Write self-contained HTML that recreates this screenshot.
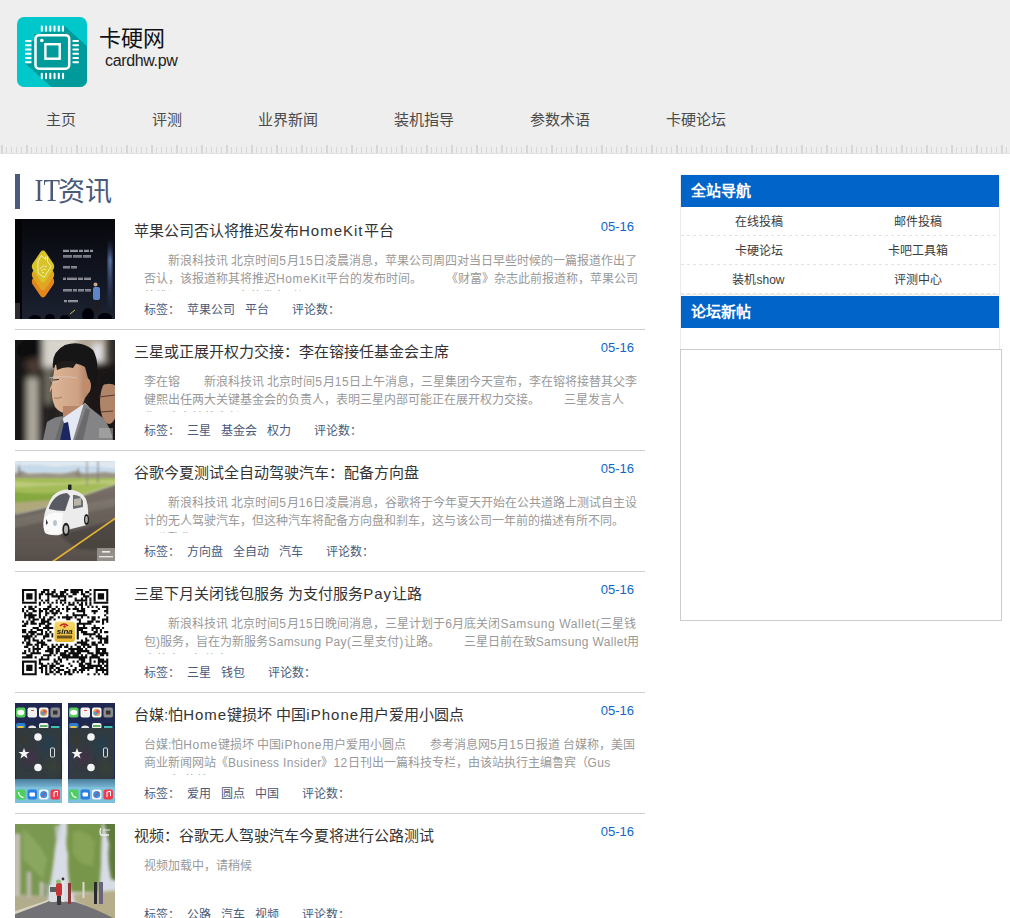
<!DOCTYPE html>
<html lang="zh-CN">
<head>
<meta charset="utf-8">
<title>卡硬网</title>
<style>
*{margin:0;padding:0;box-sizing:border-box}
html,body{width:1010px;height:918px;overflow:hidden;background:#fff}
body{font-family:"Liberation Sans",sans-serif;position:relative;text-spacing-trim:space-all}
.abs{position:absolute}
#hd{position:absolute;left:0;top:0;width:1010px;height:154px;background:#eeeeee}
#ruler1{position:absolute;left:0;top:145px;width:1010px;height:8px;
 background:linear-gradient(90deg,transparent 1px,#d6d6d6 1px,#d6d6d6 3px,transparent 3px) 0 0/25px 8px repeat-x}
#ruler2{position:absolute;left:0;top:147px;width:1010px;height:6px;
 background:linear-gradient(90deg,transparent 1px,#d6d6d6 1px,#d6d6d6 2px,transparent 2px) 0 0/5px 6px repeat-x}
#hdline{position:absolute;left:0;top:153px;width:1010px;height:1px;background:#e2e2e2}
#logo{position:absolute;left:17px;top:17px;width:70px;height:70px}
#sitename{position:absolute;left:99px;top:24px;font-size:22px;line-height:30px;color:#111;white-space:nowrap}
#siteurl{position:absolute;left:105px;top:51px;font-size:16px;letter-spacing:-0.35px;line-height:20px;color:#222;white-space:nowrap}
.nav{position:absolute;top:109px;font-size:15px;line-height:22px;color:#4a4a4a;white-space:nowrap}

#secbar{position:absolute;left:15px;top:174px;width:5px;height:35px;background:#4b5a78}
#sectitle{position:absolute;left:35px;top:172px;font-size:27px;line-height:40px;color:#4b5a78;white-space:nowrap;font-family:"Liberation Serif",serif}
#sectitle span{font-family:"Liberation Sans",sans-serif}
#sectitle em{font-style:normal;display:inline-block;transform:scaleY(1.13);transform-origin:50% 75%;margin-right:-2px;margin-left:-0.5px}
.art{position:absolute;left:0;width:660px;height:121px}
.art .pic{position:absolute;left:15px;top:0;width:100px;height:100px;overflow:hidden}
.art .pic svg{display:block}
.art .tt{position:absolute;left:134px;top:0px;font-size:15px;line-height:24px;color:#333;white-space:nowrap}
.art .dt{position:absolute;left:560px;width:74px;text-align:right;top:0;font-size:13px;line-height:16px;color:#1166c8;white-space:nowrap}
.art .sm{position:absolute;left:144px;top:33px;width:500px;height:39px;overflow:hidden;font-size:12px;line-height:18px;color:#999}
.art .sm div{white-space:nowrap;overflow:hidden}
.art .tg{position:absolute;left:144px;top:81px;font-size:12px;line-height:20px;color:#4b5a78;white-space:nowrap}
.art .tg b{font-weight:normal;margin-left:7px}
.art .tg b+b{margin-left:10px}
.art .tg i{font-style:normal;margin-left:23px}
.art .sm .l{letter-spacing:.6px}
.art .tt .l{letter-spacing:1px}
.art .ln{position:absolute;left:15px;top:110px;width:630px;height:1px;background:#cfcfcf}

#sb1{position:absolute;left:680px;top:174px;width:320px;height:121px;border:1px solid #ebebeb;border-top-color:#faf6f0}
#sb2{position:absolute;left:680px;top:295px;width:320px;height:54px;border:1px solid #ebebeb;border-top-color:#faf6f0;border-bottom:0}
.sbh{position:absolute;left:0;top:0;width:318px;height:32px;background:#0064c9;color:#fff;font-weight:bold;font-size:15px;line-height:32px;padding-left:10px;white-space:nowrap}
.row{position:absolute;left:0;width:318px;height:29px}
.row::after{content:"";position:absolute;left:0;top:28px;width:318px;height:1px;background:repeating-linear-gradient(90deg,#e3e3e3 0 3px,transparent 3px 6px)}
.row div{position:absolute;top:1px;width:159px;text-align:center;font-size:12px;line-height:28px;color:#3c3c3c;white-space:nowrap}
#ifr{position:absolute;left:680px;top:349px;width:322px;height:272px;border:1px solid #cccccc;background:#fff}
</style>
</head>
<body>
<div id="hd">
  <svg id="logo" viewBox="0 0 70 70" width="70" height="70">
    <defs><clipPath id="lc"><rect x="0" y="0" width="70" height="70" rx="7"/></clipPath></defs>
    <rect x="0" y="0" width="70" height="70" rx="7" fill="#00c8ca"/>
    <polygon clip-path="url(#lc)" fill="#009a9b" points="23.8,14.8 47,14.8 47,8.5 100,56.2 100,100 67.8,100 8,46.2 14.6,46.2 14.6,24 17.3,24 17.3,17 23.8,17"/>
    <rect x="18.5" y="18.2" width="33.7" height="33.5" rx="3.5" fill="none" stroke="#fff" stroke-width="2.5"/>
    <rect x="28.4" y="27.2" width="14.3" height="14.5" fill="none" stroke="#fff" stroke-width="2.4"/>
    <circle cx="24.8" cy="23.5" r="1.8" fill="#fff"/>
    <g fill="#fff">
      <rect x="23.8" y="8.5" width="2" height="6.3" rx="1"/><rect x="28.05" y="8.5" width="2" height="6.3" rx="1"/><rect x="32.3" y="8.5" width="2" height="6.3" rx="1"/><rect x="36.55" y="8.5" width="2" height="6.3" rx="1"/><rect x="40.8" y="8.5" width="2" height="6.3" rx="1"/><rect x="45.05" y="8.5" width="2" height="6.3" rx="1"/>
      <rect x="23.8" y="55.7" width="2" height="6.5" rx="1"/><rect x="28.05" y="55.7" width="2" height="6.5" rx="1"/><rect x="32.3" y="55.7" width="2" height="6.5" rx="1"/><rect x="36.55" y="55.7" width="2" height="6.5" rx="1"/><rect x="40.8" y="55.7" width="2" height="6.5" rx="1"/><rect x="45.05" y="55.7" width="2" height="6.5" rx="1"/>
      <rect x="8" y="23" width="6.6" height="2" rx="1"/><rect x="8" y="27.25" width="6.6" height="2" rx="1"/><rect x="8" y="31.5" width="6.6" height="2" rx="1"/><rect x="8" y="35.75" width="6.6" height="2" rx="1"/><rect x="8" y="40" width="6.6" height="2" rx="1"/><rect x="8" y="44.25" width="6.6" height="2" rx="1"/>
      <rect x="55.3" y="23" width="6.7" height="2" rx="1"/><rect x="55.3" y="27.25" width="6.7" height="2" rx="1"/><rect x="55.3" y="31.5" width="6.7" height="2" rx="1"/><rect x="55.3" y="35.75" width="6.7" height="2" rx="1"/><rect x="55.3" y="40" width="6.7" height="2" rx="1"/><rect x="55.3" y="44.25" width="6.7" height="2" rx="1"/>
    </g>
  </svg>
  <div id="sitename">卡硬网</div>
  <div id="siteurl">cardhw.pw</div>
  <div class="nav" style="left:46px">主页</div>
  <div class="nav" style="left:152px">评测</div>
  <div class="nav" style="left:258px">业界新闻</div>
  <div class="nav" style="left:394px">装机指导</div>
  <div class="nav" style="left:530px">参数术语</div>
  <div class="nav" style="left:666px">卡硬论坛</div>
  <div id="ruler1"></div><div id="ruler2"></div><div id="hdline"></div>
</div>
<div id="secbar"></div>
<div id="sectitle"><em>IT</em><span>资讯</span></div>
<div class="art" style="top:219px">
  <div class="pic"><svg width="100" height="100" viewBox="0 0 100 100">
<defs>
<linearGradient id="g1a" x1="0" y1="0" x2="0" y2="1"><stop offset="0" stop-color="#07080c"/><stop offset="0.6" stop-color="#121623"/><stop offset="1" stop-color="#1d2230"/></linearGradient>
<linearGradient id="g1b" x1="0" y1="0" x2="0" y2="1"><stop offset="0" stop-color="#2a3e6a" stop-opacity="0"/><stop offset="0.3" stop-color="#6a86c0"/><stop offset="1" stop-color="#22304a" stop-opacity="0.3"/></linearGradient>
<filter id="f1b"><feGaussianBlur stdDeviation="1.6"/></filter>
<filter id="f1s"><feGaussianBlur stdDeviation="0.45"/></filter>
</defs>
<rect width="100" height="100" fill="url(#g1a)"/>
<rect x="0" y="0" width="7" height="100" fill="#040405"/>
<rect x="93" y="20" width="4" height="70" fill="url(#g1b)" filter="url(#f1b)"/>
<rect x="0" y="84" width="5" height="16" fill="#2c2c30"/>
<g filter="url(#f1s)">
<rect x="16" y="47" width="24" height="34" rx="6" transform="rotate(0)" fill="none"/>
<rect x="-8.8" y="-8.8" width="17.6" height="17.6" rx="3.5" fill="#e2861c" transform="translate(28 62.5) scale(1 1.45) rotate(45)"/><rect x="-8.8" y="-8.8" width="17.6" height="17.6" rx="3.5" fill="#e0a524" transform="translate(28 55.5) scale(1 1.45) rotate(45)"/><rect x="-8.8" y="-8.8" width="17.6" height="17.6" rx="3.5" fill="#d8c426" transform="translate(28 47.5) scale(1 1.45) rotate(45)"/>
<path d="M23 54 L23 42 L26.5 36.5 L30.5 40.5 L30.5 38 L32.5 38 L32.5 42.5 L36 47.5 L29 58.5 Z" fill="none" stroke="#f6f0c0" stroke-width="0.9" stroke-linejoin="round"/>
<path d="M25 50 Q28.5 45 32 48 M26 52 Q28.5 49 31 50.5" fill="none" stroke="#f6f0c0" stroke-width="0.8"/><circle cx="28" cy="53.5" r="0.8" fill="#f6f0c0"/>
<g><rect x="48" y="30.8" width="6" height="2.2" fill="#b4b4bc"/><rect x="48" y="31.400000000000002" width="6" height="1" fill="#1a1d28" opacity="0.45"/><rect x="55" y="30.8" width="8" height="2.2" fill="#b4b4bc"/><rect x="55" y="31.400000000000002" width="8" height="1" fill="#1a1d28" opacity="0.45"/><rect x="64" y="30.8" width="4" height="2.2" fill="#b4b4bc"/><rect x="64" y="31.400000000000002" width="4" height="1" fill="#1a1d28" opacity="0.45"/><rect x="69" y="30.8" width="5" height="2.2" fill="#b4b4bc"/><rect x="69" y="31.400000000000002" width="5" height="1" fill="#1a1d28" opacity="0.45"/><rect x="75" y="30.8" width="3" height="2.2" fill="#b4b4bc"/><rect x="75" y="31.400000000000002" width="3" height="1" fill="#1a1d28" opacity="0.45"/><rect x="48" y="36.3" width="9" height="2.2" fill="#b4b4bc"/><rect x="48" y="36.9" width="9" height="1" fill="#1a1d28" opacity="0.45"/><rect x="58" y="36.3" width="9" height="2.2" fill="#b4b4bc"/><rect x="58" y="36.9" width="9" height="1" fill="#1a1d28" opacity="0.45"/><rect x="68" y="36.3" width="8" height="2.2" fill="#b4b4bc"/><rect x="68" y="36.9" width="8" height="1" fill="#1a1d28" opacity="0.45"/><rect x="48" y="47.2" width="7" height="2.2" fill="#b4b4bc"/><rect x="48" y="47.800000000000004" width="7" height="1" fill="#1a1d28" opacity="0.45"/><rect x="56" y="47.2" width="6" height="2.2" fill="#b4b4bc"/><rect x="56" y="47.800000000000004" width="6" height="1" fill="#1a1d28" opacity="0.45"/><rect x="48" y="58.7" width="3" height="2.2" fill="#b4b4bc"/><rect x="48" y="59.300000000000004" width="3" height="1" fill="#1a1d28" opacity="0.45"/><rect x="52" y="58.7" width="10" height="2.2" fill="#b4b4bc"/><rect x="52" y="59.300000000000004" width="10" height="1" fill="#1a1d28" opacity="0.45"/><rect x="63" y="58.7" width="5" height="2.2" fill="#b4b4bc"/><rect x="63" y="59.300000000000004" width="5" height="1" fill="#1a1d28" opacity="0.45"/><rect x="69" y="58.7" width="7" height="2.2" fill="#b4b4bc"/><rect x="69" y="59.300000000000004" width="7" height="1" fill="#1a1d28" opacity="0.45"/><rect x="48" y="70.2" width="9" height="2.2" fill="#b4b4bc"/><rect x="48" y="70.8" width="9" height="1" fill="#1a1d28" opacity="0.45"/><rect x="58" y="70.2" width="4" height="2.2" fill="#b4b4bc"/><rect x="58" y="70.8" width="4" height="1" fill="#1a1d28" opacity="0.45"/><rect x="63" y="70.2" width="6" height="2.2" fill="#b4b4bc"/><rect x="63" y="70.8" width="6" height="1" fill="#1a1d28" opacity="0.45"/><rect x="70" y="70.2" width="6" height="2.2" fill="#b4b4bc"/><rect x="70" y="70.8" width="6" height="1" fill="#1a1d28" opacity="0.45"/><rect x="49" y="81" width="3" height="2.2" fill="#b4b4bc"/><rect x="49" y="81.6" width="3" height="1" fill="#1a1d28" opacity="0.45"/><rect x="53" y="81" width="10" height="2.2" fill="#b4b4bc"/><rect x="53" y="81.6" width="10" height="1" fill="#1a1d28" opacity="0.45"/></g>
<rect x="78" y="68" width="7" height="13" rx="2" fill="#5d86c6"/>
<circle cx="80.5" cy="65.5" r="2" fill="#c8a888"/>
<rect x="79" y="81" width="5" height="12" fill="#1a1a22"/>
</g>
<g fill="#050507" filter="url(#f1s)">
<ellipse cx="20" cy="100" rx="6" ry="4"/><ellipse cx="35" cy="99" rx="5" ry="4"/><ellipse cx="50" cy="100" rx="5" ry="4"/><ellipse cx="73" cy="96" rx="6" ry="7"/><ellipse cx="90" cy="99" rx="7" ry="5"/>
</g>
<path d="M55 95 L60 91" stroke="#c8c060" stroke-width="1"/>
</svg>
</div>
  <div class="tt">苹果公司否认将推迟发布<span class="l">HomeKit</span>平台</div>
  <div class="dt">05-16</div>
  <div class="sm"><div>　　新浪科技讯 北京时间<span class="l">5</span>月<span class="l">15</span>日凌晨消息，苹果公司周四对当日早些时候的一篇报道作出了</div><div>否认，该报道称其将推迟<span class="l">HomeKit</span>平台的发布时间。　　《财富》杂志此前报道称，苹果公司</div><div>将推迟HomeKit平台的发布时间</div></div>
  <div class="tg">标签：<b>苹果公司</b><b>平台</b><i>评论数：</i></div>
  <div class="ln"></div>
</div>
<div class="art" style="top:340px">
  <div class="pic"><svg width="100" height="100" viewBox="0 0 100 100">
<defs>
<filter id="f2b" x="-20%" y="-20%" width="140%" height="140%"><feGaussianBlur stdDeviation="3"/></filter>
<filter id="f2s"><feGaussianBlur stdDeviation="0.5"/></filter>
<linearGradient id="g2f" x1="0" y1="0" x2="1" y2="0"><stop offset="0" stop-color="#dcb698"/><stop offset="0.7" stop-color="#cfa284"/><stop offset="1" stop-color="#a87c60"/></linearGradient>
</defs>
<rect width="100" height="100" fill="#2e2a28"/>
<g filter="url(#f2b)">
<rect x="-5" y="-5" width="45" height="110" fill="#161514"/>
<rect x="28" y="-5" width="38" height="32" fill="#d8d4cc"/>
<rect x="62" y="-5" width="30" height="28" fill="#b4a898"/>
<rect x="78" y="4" width="9" height="18" fill="#e4e6ec"/>
<ellipse cx="19" cy="24" rx="8" ry="11" fill="#4a3a30"/>
<ellipse cx="14" cy="10" rx="12" ry="10" fill="#0e0e0e"/>
<rect x="12" y="38" width="11" height="70" fill="#b0aa9e"/>
<rect x="26" y="30" width="10" height="70" fill="#262422"/>
<rect x="70" y="22" width="35" height="85" fill="#1a1818"/>
<rect x="30" y="28" width="7" height="36" fill="#7a7468"/>
</g>
<g filter="url(#f2s)">
<ellipse cx="94" cy="62" rx="9" ry="22" fill="#b08468"/>
<path d="M84 40 Q92 30 102 34 L102 46 Q92 41 85 47Z" fill="#181616"/>
<path d="M84 57 L100 55 M86 72 L98 71" stroke="#5a3a2a" stroke-width="1"/>
<path d="M38 28 Q36 12 50 5 Q66 0 78 10 Q85 22 81 44 L75 54 L70 30 Q58 24 44 26 Z" fill="#151414"/>
<path d="M40 25 Q56 19 70 27 L74 42 Q76 52 70 58 Q67 70 58 74 Q46 75 40 67 Q36 58 37 48 L35 52 Q34 50 37 44 Z" fill="url(#g2f)"/>
<path d="M41 24 Q50 18 62 22 L58 28 Q50 26 42 30Z" fill="#201c1a"/>
<ellipse cx="71.5" cy="46" rx="4.5" ry="8" fill="#c08c6c"/>
<rect x="48" y="66" width="22" height="16" fill="#b8876a"/>
<path d="M34 38 Q44 35 62 38" fill="none" stroke="#d4d0cc" stroke-width="0.6"/>
<ellipse cx="40" cy="40" rx="4" ry="3" fill="none" stroke="#c8c4c0" stroke-width="0.5"/>
<path d="M38 40 L44 39.5" stroke="#3a2a22" stroke-width="1"/>
<path d="M39 58 Q43 59 47 57" stroke="#9a6a50" stroke-width="0.8" fill="none"/>
<path d="M32 82 Q40 76 50 76 L52 100 L28 100 Z" fill="#7e7e80"/>
<path d="M48 78 L70 63 L74 67 L74 100 L50 100 Z" fill="#e4e8f2"/>
<path d="M69 63 L88 78 Q96 88 98 100 L58 100 Z" fill="#848486"/>
<path d="M46 84 L53 82 L56 100 L45 100 Z" fill="#1c2860"/>
<path d="M60 100 L71 68 L75 70 L68 100Z" fill="#6a6a6c"/>
<path d="M40 100 L46 80 L49 82 L45 100Z" fill="#6a6a6c"/>
<rect x="84" y="88" width="14" height="10" fill="#b8b8b8" opacity="0.5"/>
</g>
</svg>
</div>
  <div class="tt">三星或正展开权力交接：李在镕接任基金会主席</div>
  <div class="dt">05-16</div>
  <div class="sm"><div>李在镕　　新浪科技讯 北京时间<span class="l">5</span>月<span class="l">15</span>日上午消息，三星集团今天宣布，李在镕将接替其父李</div><div>健熙出任两大关键基金会的负责人，表明三星内部可能正在展开权力交接。　　三星发言人</div><div>称，李在镕将出任</div></div>
  <div class="tg">标签：<b>三星</b><b>基金会</b><b>权力</b><i>评论数：</i></div>
  <div class="ln"></div>
</div>
<div class="art" style="top:461px">
  <div class="pic"><svg width="100" height="100" viewBox="0 0 100 100">
<defs>
<linearGradient id="g3s" x1="0" y1="0" x2="0" y2="1"><stop offset="0" stop-color="#c4d8ea"/><stop offset="1" stop-color="#eaeeee"/></linearGradient>
<linearGradient id="g3r" x1="0" y1="0" x2="0" y2="1"><stop offset="0" stop-color="#7a726a"/><stop offset="0.5" stop-color="#645c56"/><stop offset="1" stop-color="#564e4a"/></linearGradient>
<filter id="f3b" x="-10%" y="-10%" width="120%" height="120%"><feGaussianBlur stdDeviation="0.8"/></filter>
<filter id="f3c"><feGaussianBlur stdDeviation="0.4"/></filter>
</defs>
<rect width="100" height="100" fill="url(#g3s)"/>
<g filter="url(#f3b)">
<path d="M-5 5 Q20 2 40 6 Q60 2 105 8 L105 0 L-5 0Z" fill="#f2f4f4" opacity="0.6"/>
<rect x="-5" y="12" width="110" height="6" fill="#b6ae9e"/>
<path d="M-5 14 L8 10 L14 14 L30 12 L45 14 L60 10 L70 13 L90 11 L105 13 L105 18 L-5 18Z" fill="#9a9486"/>
<path d="M-5 17 L105 17 L105 24 Q70 34 35 45 Q15 50 -5 53 Z" fill="#a4bc58"/>
<path d="M-5 20 Q40 24 70 20 L105 19 L105 23 Q60 22 -5 27Z" fill="#bccb7a"/>
<path d="M-5 30 Q30 36 62 28 L40 40 Q20 46 -5 46Z" fill="#86a840"/>
<path d="M-5 42 Q20 40 40 39 L30 46 Q15 50 -5 52Z" fill="#b0a87a"/>
<path d="M-5 53 Q15 50 35 45 Q70 34 105 22 L105 105 L-5 105 Z" fill="url(#g3r)"/>
<path d="M-5 58 Q40 48 105 36 L105 44 Q50 56 -5 68Z" fill="#8a827a" opacity="0.45"/>
<path d="M44 74 L105 58 L105 90 L62 88 Z" fill="#3e3836" opacity="0.55"/>
<path d="M0 53.5 Q20 49 35 45 Q70 34 100 23" fill="none" stroke="#d8d4c8" stroke-width="0.8"/>
<rect x="71.5" y="0" width="1" height="25" fill="#8a8680"/>
<rect x="82.5" y="0" width="1" height="22" fill="#7a7670"/>
<path d="M2 16 L4 2 L7 16Z M60 16 L63 6 L66 16Z" fill="#8a8074" opacity="0.8"/>
</g>
<path d="M37 100 L100 56.5 L100 58.5 L40 100Z" fill="#e4b232"/>
<g filter="url(#f3c)">
<path d="M33 44 Q38 29 52 28.5 Q66 28.5 71 38 Q74 46 73 60 L72 64 L56 68 L48 72 Q44 76 32 73 Q28 70 28.5 62 Q29 50 33 44Z" fill="#ececec"/>
<path d="M34 47 Q39 33 52 32 L55 35 L50 50 Q42 50 34 48Z" fill="#585c62"/>
<path d="M58 34 Q65 33 68 40 L68 46 L58 48 Z" fill="#6a6e70"/>
<path d="M59 38 L66 37 L66 44 L59 45Z" fill="#b8b4a8"/>
<path d="M29 58 Q34 50 48 52 L46 72 Q36 75 30 72 Q28 66 29 58Z" fill="#fafafa"/>
<ellipse cx="51" cy="68.5" rx="3.6" ry="6.8" fill="#1e1e1e"/>
<ellipse cx="51" cy="68.5" rx="2" ry="4.2" fill="#b8b8b8"/>
<ellipse cx="71.5" cy="58.5" rx="2.5" ry="5.5" fill="#1e1e1e"/>
<ellipse cx="71.5" cy="58.5" rx="1.3" ry="3.4" fill="#b0b0b0"/>
<rect x="53" y="23.5" width="3.5" height="5.5" rx="1" fill="#202428"/>
<ellipse cx="40" cy="62" rx="2" ry="3" fill="#b8c4cc"/>
<path d="M31 58 L33 62 L31 64Z" fill="#333"/>
</g>
<rect x="82" y="87" width="18" height="13" fill="#a8a49e" opacity="0.75"/>
<rect x="87" y="90" width="8" height="1.6" fill="#eee"/><rect x="84" y="95" width="14" height="1.4" fill="#e4e4e4"/>
</svg>
</div>
  <div class="tt">谷歌今夏测试全自动驾驶汽车：配备方向盘</div>
  <div class="dt">05-16</div>
  <div class="sm"><div>　　新浪科技讯 北京时间<span class="l">5</span>月<span class="l">16</span>日凌晨消息，谷歌将于今年夏天开始在公共道路上测试自主设</div><div>计的无人驾驶汽车，但这种汽车将配备方向盘和刹车，这与该公司一年前的描述有所不同。</div><div>　谷歌称，</div></div>
  <div class="tg">标签：<b>方向盘</b><b>全自动</b><b>汽车</b><i>评论数：</i></div>
  <div class="ln"></div>
</div>
<div class="art" style="top:582px">
  <div class="pic"><svg width="100" height="100" viewBox="0 0 100 100">
<defs><linearGradient id="g4" x1="0" y1="0" x2="0" y2="1"><stop offset="0" stop-color="#f6dc70"/><stop offset="1" stop-color="#e6b42c"/></linearGradient>
<filter id="f4"><feGaussianBlur stdDeviation="0.3"/></filter></defs>
<rect width="100" height="100" fill="#fff"/>
<g filter="url(#f4)"><path fill="#111" d="M7.00 7.00h14.73v2.10h-14.73zM28.05 7.00h6.31v2.10h-6.31zM38.57 7.00h2.10v2.10h-2.10zM49.10 7.00h4.21v2.10h-4.21zM55.41 7.00h12.63v2.10h-12.63zM74.36 7.00h2.10v2.10h-2.10zM78.57 7.00h14.73v2.10h-14.73zM7.00 9.10h2.10v2.10h-2.10zM19.63 9.10h2.10v2.10h-2.10zM25.94 9.10h4.21v2.10h-4.21zM32.26 9.10h2.10v2.10h-2.10zM36.47 9.10h4.21v2.10h-4.21zM44.89 9.10h6.31v2.10h-6.31zM55.41 9.10h8.42v2.10h-8.42zM65.94 9.10h2.10v2.10h-2.10zM70.15 9.10h4.21v2.10h-4.21zM78.57 9.10h2.10v2.10h-2.10zM91.20 9.10h2.10v2.10h-2.10zM7.00 11.21h2.10v2.10h-2.10zM11.21 11.21h6.31v2.10h-6.31zM19.63 11.21h2.10v2.10h-2.10zM23.84 11.21h4.21v2.10h-4.21zM30.15 11.21h8.42v2.10h-8.42zM40.68 11.21h2.10v2.10h-2.10zM44.89 11.21h4.21v2.10h-4.21zM51.20 11.21h2.10v2.10h-2.10zM57.52 11.21h4.21v2.10h-4.21zM65.94 11.21h4.21v2.10h-4.21zM74.36 11.21h2.10v2.10h-2.10zM78.57 11.21h2.10v2.10h-2.10zM82.78 11.21h6.31v2.10h-6.31zM91.20 11.21h2.10v2.10h-2.10zM7.00 13.31h2.10v2.10h-2.10zM11.21 13.31h6.31v2.10h-6.31zM19.63 13.31h2.10v2.10h-2.10zM23.84 13.31h2.10v2.10h-2.10zM32.26 13.31h2.10v2.10h-2.10zM36.47 13.31h14.73v2.10h-14.73zM53.31 13.31h4.21v2.10h-4.21zM68.04 13.31h6.31v2.10h-6.31zM78.57 13.31h2.10v2.10h-2.10zM82.78 13.31h6.31v2.10h-6.31zM91.20 13.31h2.10v2.10h-2.10zM7.00 15.42h2.10v2.10h-2.10zM11.21 15.42h6.31v2.10h-6.31zM19.63 15.42h2.10v2.10h-2.10zM23.84 15.42h2.10v2.10h-2.10zM32.26 15.42h2.10v2.10h-2.10zM42.78 15.42h2.10v2.10h-2.10zM49.10 15.42h2.10v2.10h-2.10zM59.62 15.42h2.10v2.10h-2.10zM65.94 15.42h2.10v2.10h-2.10zM70.15 15.42h2.10v2.10h-2.10zM74.36 15.42h2.10v2.10h-2.10zM78.57 15.42h2.10v2.10h-2.10zM82.78 15.42h6.31v2.10h-6.31zM91.20 15.42h2.10v2.10h-2.10zM7.00 17.52h2.10v2.10h-2.10zM19.63 17.52h2.10v2.10h-2.10zM25.94 17.52h2.10v2.10h-2.10zM30.15 17.52h4.21v2.10h-4.21zM40.68 17.52h2.10v2.10h-2.10zM44.89 17.52h6.31v2.10h-6.31zM59.62 17.52h12.63v2.10h-12.63zM74.36 17.52h2.10v2.10h-2.10zM78.57 17.52h2.10v2.10h-2.10zM91.20 17.52h2.10v2.10h-2.10zM7.00 19.63h14.73v2.10h-14.73zM23.84 19.63h2.10v2.10h-2.10zM28.05 19.63h2.10v2.10h-2.10zM32.26 19.63h2.10v2.10h-2.10zM36.47 19.63h2.10v2.10h-2.10zM40.68 19.63h2.10v2.10h-2.10zM44.89 19.63h2.10v2.10h-2.10zM49.10 19.63h2.10v2.10h-2.10zM53.31 19.63h2.10v2.10h-2.10zM57.52 19.63h2.10v2.10h-2.10zM61.73 19.63h2.10v2.10h-2.10zM65.94 19.63h2.10v2.10h-2.10zM70.15 19.63h2.10v2.10h-2.10zM74.36 19.63h2.10v2.10h-2.10zM78.57 19.63h14.73v2.10h-14.73zM23.84 21.73h2.10v2.10h-2.10zM34.36 21.73h2.10v2.10h-2.10zM46.99 21.73h2.10v2.10h-2.10zM53.31 21.73h6.31v2.10h-6.31zM63.83 21.73h4.21v2.10h-4.21zM70.15 21.73h2.10v2.10h-2.10zM74.36 21.73h2.10v2.10h-2.10zM9.10 23.84h2.10v2.10h-2.10zM13.31 23.84h4.21v2.10h-4.21zM19.63 23.84h2.10v2.10h-2.10zM32.26 23.84h4.21v2.10h-4.21zM40.68 23.84h2.10v2.10h-2.10zM51.20 23.84h2.10v2.10h-2.10zM59.62 23.84h2.10v2.10h-2.10zM65.94 23.84h2.10v2.10h-2.10zM72.25 23.84h2.10v2.10h-2.10zM76.46 23.84h2.10v2.10h-2.10zM80.67 23.84h2.10v2.10h-2.10zM86.99 23.84h6.31v2.10h-6.31zM7.00 25.94h2.10v2.10h-2.10zM13.31 25.94h6.31v2.10h-6.31zM23.84 25.94h2.10v2.10h-2.10zM28.05 25.94h6.31v2.10h-6.31zM36.47 25.94h4.21v2.10h-4.21zM42.78 25.94h2.10v2.10h-2.10zM46.99 25.94h2.10v2.10h-2.10zM51.20 25.94h4.21v2.10h-4.21zM57.52 25.94h6.31v2.10h-6.31zM65.94 25.94h4.21v2.10h-4.21zM82.78 25.94h2.10v2.10h-2.10zM91.20 25.94h2.10v2.10h-2.10zM7.00 28.05h2.10v2.10h-2.10zM11.21 28.05h2.10v2.10h-2.10zM17.52 28.05h4.21v2.10h-4.21zM23.84 28.05h4.21v2.10h-4.21zM30.15 28.05h2.10v2.10h-2.10zM34.36 28.05h4.21v2.10h-4.21zM40.68 28.05h4.21v2.10h-4.21zM51.20 28.05h2.10v2.10h-2.10zM61.73 28.05h8.42v2.10h-8.42zM76.46 28.05h6.31v2.10h-6.31zM89.09 28.05h4.21v2.10h-4.21zM9.10 30.15h2.10v2.10h-2.10zM13.31 30.15h4.21v2.10h-4.21zM23.84 30.15h2.10v2.10h-2.10zM30.15 30.15h4.21v2.10h-4.21zM36.47 30.15h6.31v2.10h-6.31zM44.89 30.15h2.10v2.10h-2.10zM57.52 30.15h2.10v2.10h-2.10zM68.04 30.15h2.10v2.10h-2.10zM78.57 30.15h2.10v2.10h-2.10zM91.20 30.15h2.10v2.10h-2.10zM9.10 32.26h12.63v2.10h-12.63zM23.84 32.26h2.10v2.10h-2.10zM30.15 32.26h2.10v2.10h-2.10zM38.57 32.26h2.10v2.10h-2.10zM51.20 32.26h2.10v2.10h-2.10zM57.52 32.26h14.73v2.10h-14.73zM89.09 32.26h2.10v2.10h-2.10zM9.10 34.36h2.10v2.10h-2.10zM13.31 34.36h6.31v2.10h-6.31zM23.84 34.36h2.10v2.10h-2.10zM28.05 34.36h2.10v2.10h-2.10zM34.36 34.36h4.21v2.10h-4.21zM42.78 34.36h2.10v2.10h-2.10zM46.99 34.36h10.52v2.10h-10.52zM59.62 34.36h2.10v2.10h-2.10zM65.94 34.36h2.10v2.10h-2.10zM72.25 34.36h2.10v2.10h-2.10zM76.46 34.36h4.21v2.10h-4.21zM82.78 34.36h2.10v2.10h-2.10zM91.20 34.36h2.10v2.10h-2.10zM13.31 36.47h2.10v2.10h-2.10zM17.52 36.47h6.31v2.10h-6.31zM25.94 36.47h4.21v2.10h-4.21zM32.26 36.47h4.21v2.10h-4.21zM38.57 36.47h2.10v2.10h-2.10zM51.20 36.47h4.21v2.10h-4.21zM61.73 36.47h4.21v2.10h-4.21zM76.46 36.47h4.21v2.10h-4.21zM86.99 36.47h6.31v2.10h-6.31zM7.00 38.57h2.10v2.10h-2.10zM11.21 38.57h2.10v2.10h-2.10zM15.42 38.57h4.21v2.10h-4.21zM25.94 38.57h8.42v2.10h-8.42zM63.83 38.57h2.10v2.10h-2.10zM72.25 38.57h6.31v2.10h-6.31zM80.67 38.57h4.21v2.10h-4.21zM86.99 38.57h2.10v2.10h-2.10zM91.20 38.57h2.10v2.10h-2.10zM9.10 40.68h4.21v2.10h-4.21zM15.42 40.68h6.31v2.10h-6.31zM23.84 40.68h6.31v2.10h-6.31zM32.26 40.68h4.21v2.10h-4.21zM61.73 40.68h14.73v2.10h-14.73zM86.99 40.68h2.10v2.10h-2.10zM7.00 42.78h4.21v2.10h-4.21zM23.84 42.78h2.10v2.10h-2.10zM30.15 42.78h4.21v2.10h-4.21zM61.73 42.78h2.10v2.10h-2.10zM68.04 42.78h2.10v2.10h-2.10zM78.57 42.78h2.10v2.10h-2.10zM17.52 44.89h6.31v2.10h-6.31zM28.05 44.89h10.52v2.10h-10.52zM61.73 44.89h10.52v2.10h-10.52zM76.46 44.89h8.42v2.10h-8.42zM86.99 44.89h2.10v2.10h-2.10zM7.00 46.99h4.21v2.10h-4.21zM15.42 46.99h2.10v2.10h-2.10zM21.73 46.99h6.31v2.10h-6.31zM32.26 46.99h2.10v2.10h-2.10zM61.73 46.99h6.31v2.10h-6.31zM76.46 46.99h2.10v2.10h-2.10zM80.67 46.99h2.10v2.10h-2.10zM84.88 46.99h2.10v2.10h-2.10zM7.00 49.10h4.21v2.10h-4.21zM13.31 49.10h8.42v2.10h-8.42zM25.94 49.10h2.10v2.10h-2.10zM30.15 49.10h2.10v2.10h-2.10zM34.36 49.10h2.10v2.10h-2.10zM61.73 49.10h2.10v2.10h-2.10zM65.94 49.10h6.31v2.10h-6.31zM78.57 49.10h4.21v2.10h-4.21zM84.88 49.10h2.10v2.10h-2.10zM89.09 49.10h4.21v2.10h-4.21zM11.21 51.20h2.10v2.10h-2.10zM15.42 51.20h4.21v2.10h-4.21zM21.73 51.20h6.31v2.10h-6.31zM30.15 51.20h4.21v2.10h-4.21zM36.47 51.20h2.10v2.10h-2.10zM61.73 51.20h2.10v2.10h-2.10zM68.04 51.20h12.63v2.10h-12.63zM82.78 51.20h2.10v2.10h-2.10zM7.00 53.31h10.52v2.10h-10.52zM19.63 53.31h2.10v2.10h-2.10zM28.05 53.31h6.31v2.10h-6.31zM36.47 53.31h2.10v2.10h-2.10zM61.73 53.31h2.10v2.10h-2.10zM74.36 53.31h2.10v2.10h-2.10zM80.67 53.31h6.31v2.10h-6.31zM91.20 53.31h2.10v2.10h-2.10zM9.10 55.41h6.31v2.10h-6.31zM17.52 55.41h2.10v2.10h-2.10zM28.05 55.41h2.10v2.10h-2.10zM61.73 55.41h2.10v2.10h-2.10zM70.15 55.41h2.10v2.10h-2.10zM76.46 55.41h2.10v2.10h-2.10zM82.78 55.41h10.52v2.10h-10.52zM9.10 57.52h2.10v2.10h-2.10zM13.31 57.52h2.10v2.10h-2.10zM17.52 57.52h6.31v2.10h-6.31zM25.94 57.52h2.10v2.10h-2.10zM32.26 57.52h4.21v2.10h-4.21zM65.94 57.52h2.10v2.10h-2.10zM70.15 57.52h4.21v2.10h-4.21zM84.88 57.52h2.10v2.10h-2.10zM89.09 57.52h4.21v2.10h-4.21zM7.00 59.62h2.10v2.10h-2.10zM11.21 59.62h4.21v2.10h-4.21zM21.73 59.62h8.42v2.10h-8.42zM61.73 59.62h10.52v2.10h-10.52zM76.46 59.62h4.21v2.10h-4.21zM82.78 59.62h4.21v2.10h-4.21zM89.09 59.62h4.21v2.10h-4.21zM11.21 61.73h6.31v2.10h-6.31zM19.63 61.73h4.21v2.10h-4.21zM25.94 61.73h6.31v2.10h-6.31zM36.47 61.73h2.10v2.10h-2.10zM40.68 61.73h2.10v2.10h-2.10zM44.89 61.73h4.21v2.10h-4.21zM51.20 61.73h2.10v2.10h-2.10zM59.62 61.73h2.10v2.10h-2.10zM65.94 61.73h8.42v2.10h-8.42zM76.46 61.73h6.31v2.10h-6.31zM86.99 61.73h2.10v2.10h-2.10zM9.10 63.83h4.21v2.10h-4.21zM17.52 63.83h2.10v2.10h-2.10zM21.73 63.83h2.10v2.10h-2.10zM25.94 63.83h2.10v2.10h-2.10zM32.26 63.83h2.10v2.10h-2.10zM36.47 63.83h4.21v2.10h-4.21zM42.78 63.83h4.21v2.10h-4.21zM49.10 63.83h4.21v2.10h-4.21zM55.41 63.83h2.10v2.10h-2.10zM61.73 63.83h4.21v2.10h-4.21zM68.04 63.83h2.10v2.10h-2.10zM72.25 63.83h4.21v2.10h-4.21zM80.67 63.83h2.10v2.10h-2.10zM13.31 65.94h2.10v2.10h-2.10zM17.52 65.94h8.42v2.10h-8.42zM32.26 65.94h6.31v2.10h-6.31zM40.68 65.94h4.21v2.10h-4.21zM53.31 65.94h14.73v2.10h-14.73zM70.15 65.94h2.10v2.10h-2.10zM80.67 65.94h10.52v2.10h-10.52zM9.10 68.04h2.10v2.10h-2.10zM13.31 68.04h2.10v2.10h-2.10zM17.52 68.04h2.10v2.10h-2.10zM21.73 68.04h2.10v2.10h-2.10zM30.15 68.04h8.42v2.10h-8.42zM40.68 68.04h4.21v2.10h-4.21zM49.10 68.04h4.21v2.10h-4.21zM55.41 68.04h4.21v2.10h-4.21zM61.73 68.04h12.63v2.10h-12.63zM80.67 68.04h4.21v2.10h-4.21zM86.99 68.04h4.21v2.10h-4.21zM7.00 70.15h4.21v2.10h-4.21zM15.42 70.15h10.52v2.10h-10.52zM34.36 70.15h4.21v2.10h-4.21zM40.68 70.15h2.10v2.10h-2.10zM44.89 70.15h6.31v2.10h-6.31zM53.31 70.15h12.63v2.10h-12.63zM72.25 70.15h6.31v2.10h-6.31zM80.67 70.15h12.63v2.10h-12.63zM11.21 72.25h6.31v2.10h-6.31zM28.05 72.25h8.42v2.10h-8.42zM38.57 72.25h2.10v2.10h-2.10zM44.89 72.25h10.52v2.10h-10.52zM57.52 72.25h6.31v2.10h-6.31zM65.94 72.25h2.10v2.10h-2.10zM70.15 72.25h2.10v2.10h-2.10zM76.46 72.25h6.31v2.10h-6.31zM84.88 72.25h4.21v2.10h-4.21zM91.20 72.25h2.10v2.10h-2.10zM7.00 74.36h10.52v2.10h-10.52zM19.63 74.36h2.10v2.10h-2.10zM25.94 74.36h2.10v2.10h-2.10zM32.26 74.36h2.10v2.10h-2.10zM42.78 74.36h2.10v2.10h-2.10zM46.99 74.36h25.26v2.10h-25.26zM74.36 74.36h10.52v2.10h-10.52zM23.84 76.46h10.52v2.10h-10.52zM38.57 76.46h2.10v2.10h-2.10zM42.78 76.46h4.21v2.10h-4.21zM51.20 76.46h2.10v2.10h-2.10zM63.83 76.46h6.31v2.10h-6.31zM74.36 76.46h2.10v2.10h-2.10zM82.78 76.46h6.31v2.10h-6.31zM91.20 76.46h2.10v2.10h-2.10zM7.00 78.57h14.73v2.10h-14.73zM23.84 78.57h2.10v2.10h-2.10zM38.57 78.57h4.21v2.10h-4.21zM44.89 78.57h2.10v2.10h-2.10zM57.52 78.57h2.10v2.10h-2.10zM61.73 78.57h2.10v2.10h-2.10zM65.94 78.57h4.21v2.10h-4.21zM74.36 78.57h2.10v2.10h-2.10zM78.57 78.57h2.10v2.10h-2.10zM82.78 78.57h10.52v2.10h-10.52zM7.00 80.67h2.10v2.10h-2.10zM19.63 80.67h2.10v2.10h-2.10zM23.84 80.67h4.21v2.10h-4.21zM32.26 80.67h2.10v2.10h-2.10zM36.47 80.67h2.10v2.10h-2.10zM40.68 80.67h4.21v2.10h-4.21zM53.31 80.67h2.10v2.10h-2.10zM63.83 80.67h4.21v2.10h-4.21zM70.15 80.67h6.31v2.10h-6.31zM82.78 80.67h2.10v2.10h-2.10zM86.99 80.67h2.10v2.10h-2.10zM91.20 80.67h2.10v2.10h-2.10zM7.00 82.78h2.10v2.10h-2.10zM11.21 82.78h6.31v2.10h-6.31zM19.63 82.78h2.10v2.10h-2.10zM25.94 82.78h6.31v2.10h-6.31zM34.36 82.78h6.31v2.10h-6.31zM44.89 82.78h4.21v2.10h-4.21zM55.41 82.78h2.10v2.10h-2.10zM63.83 82.78h6.31v2.10h-6.31zM72.25 82.78h14.73v2.10h-14.73zM89.09 82.78h4.21v2.10h-4.21zM7.00 84.88h2.10v2.10h-2.10zM11.21 84.88h6.31v2.10h-6.31zM19.63 84.88h2.10v2.10h-2.10zM23.84 84.88h4.21v2.10h-4.21zM30.15 84.88h2.10v2.10h-2.10zM34.36 84.88h4.21v2.10h-4.21zM40.68 84.88h4.21v2.10h-4.21zM51.20 84.88h2.10v2.10h-2.10zM59.62 84.88h2.10v2.10h-2.10zM65.94 84.88h12.63v2.10h-12.63zM80.67 84.88h2.10v2.10h-2.10zM84.88 84.88h4.21v2.10h-4.21zM91.20 84.88h2.10v2.10h-2.10zM7.00 86.99h2.10v2.10h-2.10zM11.21 86.99h6.31v2.10h-6.31zM19.63 86.99h2.10v2.10h-2.10zM25.94 86.99h2.10v2.10h-2.10zM30.15 86.99h2.10v2.10h-2.10zM34.36 86.99h2.10v2.10h-2.10zM38.57 86.99h2.10v2.10h-2.10zM42.78 86.99h6.31v2.10h-6.31zM53.31 86.99h2.10v2.10h-2.10zM57.52 86.99h4.21v2.10h-4.21zM63.83 86.99h6.31v2.10h-6.31zM72.25 86.99h2.10v2.10h-2.10zM80.67 86.99h12.63v2.10h-12.63zM7.00 89.09h2.10v2.10h-2.10zM19.63 89.09h2.10v2.10h-2.10zM25.94 89.09h2.10v2.10h-2.10zM30.15 89.09h2.10v2.10h-2.10zM34.36 89.09h4.21v2.10h-4.21zM40.68 89.09h4.21v2.10h-4.21zM49.10 89.09h6.31v2.10h-6.31zM57.52 89.09h2.10v2.10h-2.10zM61.73 89.09h2.10v2.10h-2.10zM65.94 89.09h2.10v2.10h-2.10zM80.67 89.09h2.10v2.10h-2.10zM86.99 89.09h2.10v2.10h-2.10zM91.20 89.09h2.10v2.10h-2.10zM7.00 91.20h14.73v2.10h-14.73zM30.15 91.20h4.21v2.10h-4.21zM38.57 91.20h2.10v2.10h-2.10zM44.89 91.20h2.10v2.10h-2.10zM49.10 91.20h2.10v2.10h-2.10zM53.31 91.20h4.21v2.10h-4.21zM72.25 91.20h2.10v2.10h-2.10zM78.57 91.20h2.10v2.10h-2.10zM82.78 91.20h2.10v2.10h-2.10zM89.09 91.20h4.21v2.10h-4.21z"/>
<rect x="38.5" y="38.5" width="22.5" height="22.5" rx="3" fill="#fff"/>
<rect x="39.5" y="39.5" width="20.5" height="20.5" rx="3" fill="url(#g4)"/>
<path d="M45 44 Q49 40 53 44" fill="none" stroke="#c82020" stroke-width="1.6"/>
<circle cx="49.5" cy="44.5" r="1.2" fill="#c82020"/>
<text x="49.8" y="51.5" font-family="Liberation Sans" font-weight="bold" font-style="italic" font-size="8" text-anchor="middle" fill="#1a1a1a">sina</text>
<rect x="42" y="53.5" width="15" height="3" fill="#5a4018" opacity="0.85"/>
</g></svg></div>
  <div class="tt">三星下月关闭钱包服务 为支付服务<span class="l">Pay</span>让路</div>
  <div class="dt">05-16</div>
  <div class="sm"><div>　　新浪科技讯 北京时间<span class="l">5</span>月<span class="l">15</span>日晚间消息，三星计划于<span class="l">6</span>月底关闭<span class="l">Samsung Wallet(</span>三星钱</div><div>包<span class="l" style="letter-spacing:.35px">)</span>服务，旨在为新服务<span class="l" style="letter-spacing:.35px">Samsung Pay(</span>三星支付<span class="l" style="letter-spacing:.35px">)</span>让路。　　三星日前在致<span class="l" style="letter-spacing:.35px">Samsung Wallet</span>用</div><div>户的电子邮件中</div></div>
  <div class="tg">标签：<b>三星</b><b>钱包</b><i>评论数：</i></div>
  <div class="ln"></div>
</div>
<div class="art" style="top:703px">
  <div class="pic"><svg width="100" height="100" viewBox="0 0 100 100">
<defs><linearGradient id="g5w" x1="0" y1="0" x2="0" y2="1"><stop offset="0" stop-color="#4a7c9c"/><stop offset="1" stop-color="#80c0dc"/></linearGradient>
<filter id="f5s"><feGaussianBlur stdDeviation="0.35"/></filter><filter id="f5b"><feGaussianBlur stdDeviation="3"/></filter></defs>
<rect width="100" height="100" fill="#fff"/>
<g transform="translate(0 0)">
<rect x="0" y="0" width="47" height="100" fill="#1e2850"/>
<rect x="0" y="76" width="47" height="10" fill="url(#g5w)"/>
<rect x="0" y="84" width="47" height="16" fill="#7cc0dc"/>
<g filter="url(#f5s)">
<rect x="1" y="4.5" width="9.5" height="10" rx="2" fill="#52cc5a"/>
<ellipse cx="5.7" cy="9.5" rx="3.5" ry="2.8" fill="#fff"/>
<rect x="12.5" y="4.5" width="9.5" height="10" rx="2" fill="#f2f2f2"/>
<rect x="16" y="7" width="3" height="1" fill="#e05050"/>
<rect x="24" y="4.5" width="9.5" height="10" rx="2" fill="#f4f4f4"/>
<circle cx="28.7" cy="9.5" r="3.6" fill="#e8a040"/><circle cx="27.8" cy="10.3" r="2" fill="#50a0d0"/><circle cx="29.8" cy="8.6" r="1.8" fill="#e05060"/>
<rect x="35.5" y="4.5" width="9.5" height="10" rx="2" fill="#8a8a8a"/>
<rect x="38" y="7.5" width="4.5" height="4" fill="#333"/>
<rect x="1" y="20" width="9.5" height="6" rx="2" fill="#2a7ed0"/><rect x="2.5" y="23" width="6" height="3" fill="#e8c040"/>
<rect x="12.5" y="20" width="9.5" height="6" rx="2" fill="#202a44"/><ellipse cx="17.2" cy="25" rx="4" ry="2.5" fill="#e8e8e8"/>
<rect x="24" y="20" width="9.5" height="6" rx="2" fill="#f0f0f0"/><rect x="25" y="22" width="7.5" height="2" fill="#60b060"/>
<rect x="35.5" y="20" width="9.5" height="6" rx="2" fill="#1a2246"/><rect x="36" y="23" width="8.5" height="3" fill="#40c0b0"/>
<rect x="1" y="25" width="45" height="51" fill="#323a40"/>
<g filter="url(#f5b)"><ellipse cx="16" cy="55" rx="6" ry="8" fill="#4a3048" opacity="0.7"/>
<ellipse cx="33" cy="42" rx="8" ry="10" fill="#25404e" opacity="0.7"/>
<ellipse cx="38" cy="64" rx="6" ry="8" fill="#3e4630" opacity="0.6"/>
<ellipse cx="8" cy="36" rx="5" ry="6" fill="#3c3828" opacity="0.6"/></g>
<circle cx="23" cy="34" r="3.8" fill="#f4f4f4"/>
<path d="M9 45 L10.5 49 L14.5 49 L11.3 51.5 L12.6 55.5 L9 53 L5.4 55.5 L6.7 51.5 L3.5 49 L7.5 49Z" fill="#f4f4f4"/>
<rect x="35.5" y="45" width="4" height="9" rx="1" fill="none" stroke="#f0f0f0" stroke-width="0.9"/>
<circle cx="23" cy="64.5" r="3.8" fill="#f4f4f4"/>
<rect x="1" y="86.5" width="9.5" height="10" rx="2" fill="#4ed060"/>
<path d="M3.5 89 Q4 94 8.5 94.5" fill="none" stroke="#fff" stroke-width="1.3"/>
<rect x="12.5" y="86.5" width="9.5" height="10" rx="2" fill="#2a7ee0"/>
<rect x="14.5" y="89.5" width="5.5" height="4" rx="1" fill="#fff"/>
<rect x="24" y="86.5" width="9.5" height="10" rx="2" fill="#f2f4f8"/>
<circle cx="28.7" cy="91.5" r="3.5" fill="#3a8ae0"/><path d="M26.5 94 L31 89" stroke="#e03030" stroke-width="0.8"/>
<rect x="35.5" y="86.5" width="9.5" height="10" rx="2" fill="#f03a50"/>
<path d="M39 94 L39 89 L42.5 88.3 L42.5 93" fill="none" stroke="#fff" stroke-width="1"/>
</g>
</g>
<g transform="translate(53 0)">
<rect x="0" y="0" width="47" height="100" fill="#1e2850"/>
<rect x="0" y="76" width="47" height="10" fill="url(#g5w)"/>
<rect x="0" y="84" width="47" height="16" fill="#7cc0dc"/>
<g filter="url(#f5s)">
<rect x="1" y="4.5" width="9.5" height="10" rx="2" fill="#52cc5a"/>
<ellipse cx="5.7" cy="9.5" rx="3.5" ry="2.8" fill="#fff"/>
<rect x="12.5" y="4.5" width="9.5" height="10" rx="2" fill="#f2f2f2"/>
<rect x="16" y="7" width="3" height="1" fill="#e05050"/>
<rect x="24" y="4.5" width="9.5" height="10" rx="2" fill="#f4f4f4"/>
<circle cx="28.7" cy="9.5" r="3.6" fill="#e8a040"/><circle cx="27.8" cy="10.3" r="2" fill="#50a0d0"/><circle cx="29.8" cy="8.6" r="1.8" fill="#e05060"/>
<rect x="35.5" y="4.5" width="9.5" height="10" rx="2" fill="#8a8a8a"/>
<rect x="38" y="7.5" width="4.5" height="4" fill="#333"/>
<rect x="1" y="20" width="9.5" height="6" rx="2" fill="#2a7ed0"/><rect x="2.5" y="23" width="6" height="3" fill="#e8c040"/>
<rect x="12.5" y="20" width="9.5" height="6" rx="2" fill="#202a44"/><ellipse cx="17.2" cy="25" rx="4" ry="2.5" fill="#e8e8e8"/>
<rect x="24" y="20" width="9.5" height="6" rx="2" fill="#f0f0f0"/><rect x="25" y="22" width="7.5" height="2" fill="#60b060"/>
<rect x="35.5" y="20" width="9.5" height="6" rx="2" fill="#1a2246"/><rect x="36" y="23" width="8.5" height="3" fill="#40c0b0"/>
<rect x="1" y="25" width="45" height="51" fill="#323a40"/>
<g filter="url(#f5b)"><ellipse cx="16" cy="55" rx="6" ry="8" fill="#4a3048" opacity="0.7"/>
<ellipse cx="33" cy="42" rx="8" ry="10" fill="#25404e" opacity="0.7"/>
<ellipse cx="38" cy="64" rx="6" ry="8" fill="#3e4630" opacity="0.6"/>
<ellipse cx="8" cy="36" rx="5" ry="6" fill="#3c3828" opacity="0.6"/></g>
<circle cx="23" cy="34" r="3.8" fill="#f4f4f4"/>
<path d="M9 45 L10.5 49 L14.5 49 L11.3 51.5 L12.6 55.5 L9 53 L5.4 55.5 L6.7 51.5 L3.5 49 L7.5 49Z" fill="#f4f4f4"/>
<rect x="35.5" y="45" width="4" height="9" rx="1" fill="none" stroke="#f0f0f0" stroke-width="0.9"/>
<circle cx="23" cy="64.5" r="3.8" fill="#f4f4f4"/>
<rect x="1" y="86.5" width="9.5" height="10" rx="2" fill="#4ed060"/>
<path d="M3.5 89 Q4 94 8.5 94.5" fill="none" stroke="#fff" stroke-width="1.3"/>
<rect x="12.5" y="86.5" width="9.5" height="10" rx="2" fill="#2a7ee0"/>
<rect x="14.5" y="89.5" width="5.5" height="4" rx="1" fill="#fff"/>
<rect x="24" y="86.5" width="9.5" height="10" rx="2" fill="#f2f4f8"/>
<circle cx="28.7" cy="91.5" r="3.5" fill="#3a8ae0"/><path d="M26.5 94 L31 89" stroke="#e03030" stroke-width="0.8"/>
<rect x="35.5" y="86.5" width="9.5" height="10" rx="2" fill="#f03a50"/>
<path d="M39 94 L39 89 L42.5 88.3 L42.5 93" fill="none" stroke="#fff" stroke-width="1"/>
</g>
</g>
</svg></div>
  <div class="tt">台媒:怕<span class="l">Home</span>键损坏 中国<span class="l">iPhone</span>用户爱用小圆点</div>
  <div class="dt">05-16</div>
  <div class="sm"><div>台媒:怕<span class="l">Home</span>键损坏 中国<span class="l">iPhone</span>用户爱用小圆点　　参考消息网<span class="l">5</span>月<span class="l">15</span>日报道 台媒称，美国</div><div>商业新闻网站《<span class="l" style="letter-spacing:.34px">Business Insider</span>》<span class="l" style="letter-spacing:.34px">12</span>日刊出一篇科技专栏，由该站执行主编鲁宾（<span class="l" style="letter-spacing:.34px">Gus</span></div><div>Lubin）执笔</div></div>
  <div class="tg">标签：<b>爱用</b><b>圆点</b><b>中国</b><i>评论数：</i></div>
  <div class="ln"></div>
</div>
<div class="art" style="top:824px">
  <div class="pic"><svg width="100" height="100" viewBox="0 0 100 100">
<defs>
<filter id="f6b" x="-10%" y="-10%" width="120%" height="120%"><feGaussianBlur stdDeviation="1.6"/></filter>
<filter id="f6s"><feGaussianBlur stdDeviation="0.6"/></filter>
</defs>
<rect width="100" height="100" fill="#d8dce6"/>
<g filter="url(#f6b)">
<path d="M-5 -5 L46 -5 Q42 10 40 25 Q38 45 35 60 L33 74 L-5 78Z" fill="#7a9850"/>
<path d="M52 -5 L88 -5 Q86 20 86 40 Q85 55 84 68 L56 68 Q52 50 53 30 Q50 20 52 10Z" fill="#789648"/>
<path d="M88 -5 L105 -5 L105 58 L96 55 Q92 35 94 20Z" fill="#5e7a3c"/>
<path d="M8 5 Q22 15 32 35 L28 55 Q18 45 8 35Z" fill="#92ae68" opacity="0.7"/>
<path d="M58 8 Q70 4 80 18 L78 42 Q65 42 58 30Z" fill="#90ac62" opacity="0.6"/>
<path d="M40 2 Q44 0 46 5 L44 20 Q40 15 40 2Z" fill="#c8d0d0" opacity="0.7"/>
<path d="M-5 70 L34 72 L32 80 L-5 90Z" fill="#b0ac8c"/>
<path d="M58 70 L105 66 L105 105 L95 105 Q80 86 60 78Z" fill="#b6ae8a"/>
<rect x="-1" y="10" width="6" height="62" fill="#c4c0b4"/>
<rect x="12" y="48" width="4" height="26" fill="#bcb8ac"/>
<rect x="25" y="58" width="3" height="14" fill="#c8c4b8"/>
<path d="M28 60 L30 72 L34 72 L34 60Z" fill="#a0a4a0" opacity="0.7"/>
</g>
<g filter="url(#f6s)">
<rect x="67.5" y="58" width="2" height="16" fill="#dcd8cc"/>
<path d="M-5 92 Q15 82 33 77 L60 78 Q85 86 105 98 L105 105 L-5 105Z" fill="#727276"/>
<path d="M-2 88 L33 76 L33.5 77.5 L-2 91Z" fill="#d8d4c0"/>
<rect x="34" y="61" width="8" height="17" rx="2" fill="#dadee2"/>
<rect x="35" y="63" width="6" height="5" fill="#5a5e62"/>
<rect x="41" y="59" width="6" height="13" rx="2" fill="#c43434"/>
<ellipse cx="43.5" cy="57.5" rx="2.5" ry="2" fill="#8ac070"/>
<rect x="42" y="72" width="4" height="9" fill="#3a3434"/>
<rect x="47" y="57" width="2.5" height="21" fill="#e4e4e4"/>
<circle cx="48" cy="55" r="1.4" fill="#3a2a2a"/>
<rect x="53" y="59" width="3" height="21" fill="#8a3838"/>
<rect x="79" y="58" width="3" height="22" fill="#2a2a30"/>
<rect x="84" y="58" width="4" height="22" fill="#6a6480"/>
<path d="M86 4 Q84 8 86 11 L94 11" fill="none" stroke="#f2f2f2" stroke-width="1.3"/>
<path d="M88 6 L95 6" stroke="#e8e8e8" stroke-width="1"/>
</g>
</svg>
</div>
  <div class="tt">视频：谷歌无人驾驶汽车今夏将进行公路测试</div>
  <div class="dt">05-16</div>
  <div class="sm"><div>视频加载中，请稍候</div></div>
  <div class="tg">标签：<b>公路</b><b>汽车</b><b>视频</b><i>评论数：</i></div>
  <div class="ln"></div>
</div>
<div id="sb1">
  <div class="sbh">全站导航</div>
  <div class="row" style="top:32px"><div style="left:-2px">在线投稿</div><div style="left:157px">邮件投稿</div></div>
  <div class="row" style="top:61px"><div style="left:-2px">卡硬论坛</div><div style="left:157px">卡吧工具箱</div></div>
  <div class="row" style="top:90px"><div style="left:-2px">装机show</div><div style="left:157px">评测中心</div></div>
</div>
<div id="sb2"><div class="sbh">论坛新帖</div></div>
<div id="ifr"></div>
</body>
</html>
